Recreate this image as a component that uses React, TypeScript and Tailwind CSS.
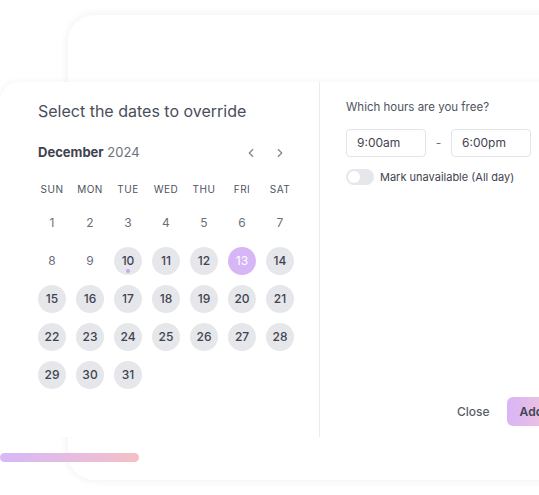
import React from 'react';
import { ChevronLeft, ChevronRight } from 'lucide-react';

const weekdays = ['SUN', 'MON', 'TUE', 'WED', 'THU', 'FRI', 'SAT'];
const days = Array.from({ length: 31 }, (_, i) => i + 1);

const DayCell: React.FC<{ day: number }> = ({ day }) => {
    // days before the 10th are past, 13 is the selected one
    if (day < 10) {
        return (
            <div className="w-[28px] h-[28px] flex items-center justify-center text-[12px] text-[#6b6f7b]">
                {day}
            </div>
        );
    }
    if (day === 13) {
        return (
            <div className="w-[28px] h-[28px] rounded-full bg-[#d7b6f6] flex items-center justify-center text-[12px] text-white">
                {day}
            </div>
        );
    }
    return (
        <div className="relative w-[28px] h-[28px] rounded-full bg-[#e6e7eb] flex items-center justify-center text-[12px] font-medium text-[#3f4350]">
            {day}
            {day === 10 && (
                <span className="absolute bottom-[2px] left-1/2 -translate-x-1/2 w-[4px] h-[4px] rounded-full bg-[#c9a5f2]" />
            )}
        </div>
    );
};

const App: React.FC = () => {
    return (
        <div className="relative w-[539px] h-[495px] overflow-hidden bg-white font-['Inter',sans-serif]">
            {/* background card */}
            <div className="absolute left-[68px] top-[15px] w-[540px] h-[465px] rounded-[26px] bg-white shadow-[0_0_10px_rgba(0,0,0,0.07)]" />

            {/* override modal */}
            <div className="absolute left-0 top-[82px] w-[600px] h-[355px] bg-white rounded-tl-[20px] shadow-[-2px_-2px_6px_rgba(0,0,0,0.03)] flex">
                <div className="w-[320px] h-full pl-[38px] pt-[17px] border-r border-[#ebebee]">
                    <h2 className="text-[16px] leading-[24px] text-[#4a4e5b]">Select the dates to override</h2>

                    <div className="mt-[20px] w-[256px] h-[20px] flex items-center">
                        <p className="text-[13px] text-[#6b6f7b]">
                            <span className="font-bold text-[#3f4350]">December</span> 2024
                        </p>
                        <div className="ml-auto mr-[7px] flex items-center gap-[15px] text-[#80838e]">
                            <ChevronLeft className="w-[14px] h-[14px]" strokeWidth={2} />
                            <ChevronRight className="w-[14px] h-[14px]" strokeWidth={2} />
                        </div>
                    </div>

                    <div className="mt-[19px] grid grid-cols-[repeat(7,28px)] gap-x-[10px] w-[256px]">
                        {weekdays.map((w) => (
                            <div key={w} className="h-[14px] flex items-center justify-center text-[10px] tracking-wider text-[#4f5360]">
                                {w}
                            </div>
                        ))}
                    </div>

                    <div className="mt-[13px] grid grid-cols-[repeat(7,28px)] gap-x-[10px] gap-y-[10px] w-[256px]">
                        {days.map((d) => (
                            <DayCell key={d} day={d} />
                        ))}
                    </div>
                </div>

                <div className="flex-1 h-full pl-[26px] pt-[17px] flex flex-col">
                    <p className="text-[11.5px] leading-[16px] text-[#4f5360]">Which hours are you free?</p>

                    <div className="mt-[14px] flex items-center">
                        <div className="w-[80px] h-[28px] px-[10px] flex items-center rounded-[4px] border border-[#e3e4e8] text-[12px] text-[#3f4350]">
                            9:00am
                        </div>
                        <span className="w-[25px] text-center text-[12px] text-[#6b6f7b]">-</span>
                        <div className="w-[80px] h-[28px] px-[10px] flex items-center rounded-[4px] border border-[#e3e4e8] text-[12px] text-[#3f4350]">
                            6:00pm
                        </div>
                    </div>

                    <div className="mt-[12px] flex items-center">
                        <div className="w-[28px] h-[16px] rounded-full bg-[#e6e7eb] flex items-center px-[2px]">
                            <span className="w-[12px] h-[12px] rounded-full bg-white" />
                        </div>
                        <span className="ml-[6px] text-[11px] text-[#3f4350]">Mark unavailable (All day)</span>
                    </div>

                    <div className="mt-auto mb-[11px] ml-[111px] flex items-center">
                        <button className="text-[12px] font-medium text-[#595d69]">Close</button>
                        <button className="ml-[17px] h-[29px] px-[13px] rounded-[6px] bg-gradient-to-r from-[#d8b5f6] to-[#f2c4d8] text-[12px] font-semibold text-[#3f4350]">
                            Add
                        </button>
                    </div>
                </div>
            </div>

            {/* progress bar */}
            <div className="absolute left-0 top-[453px] w-[139px] h-[9px] rounded-full bg-gradient-to-r from-[#d6b8f8] to-[#f4c0c6]" />
        </div>
    );
};

export default App;
